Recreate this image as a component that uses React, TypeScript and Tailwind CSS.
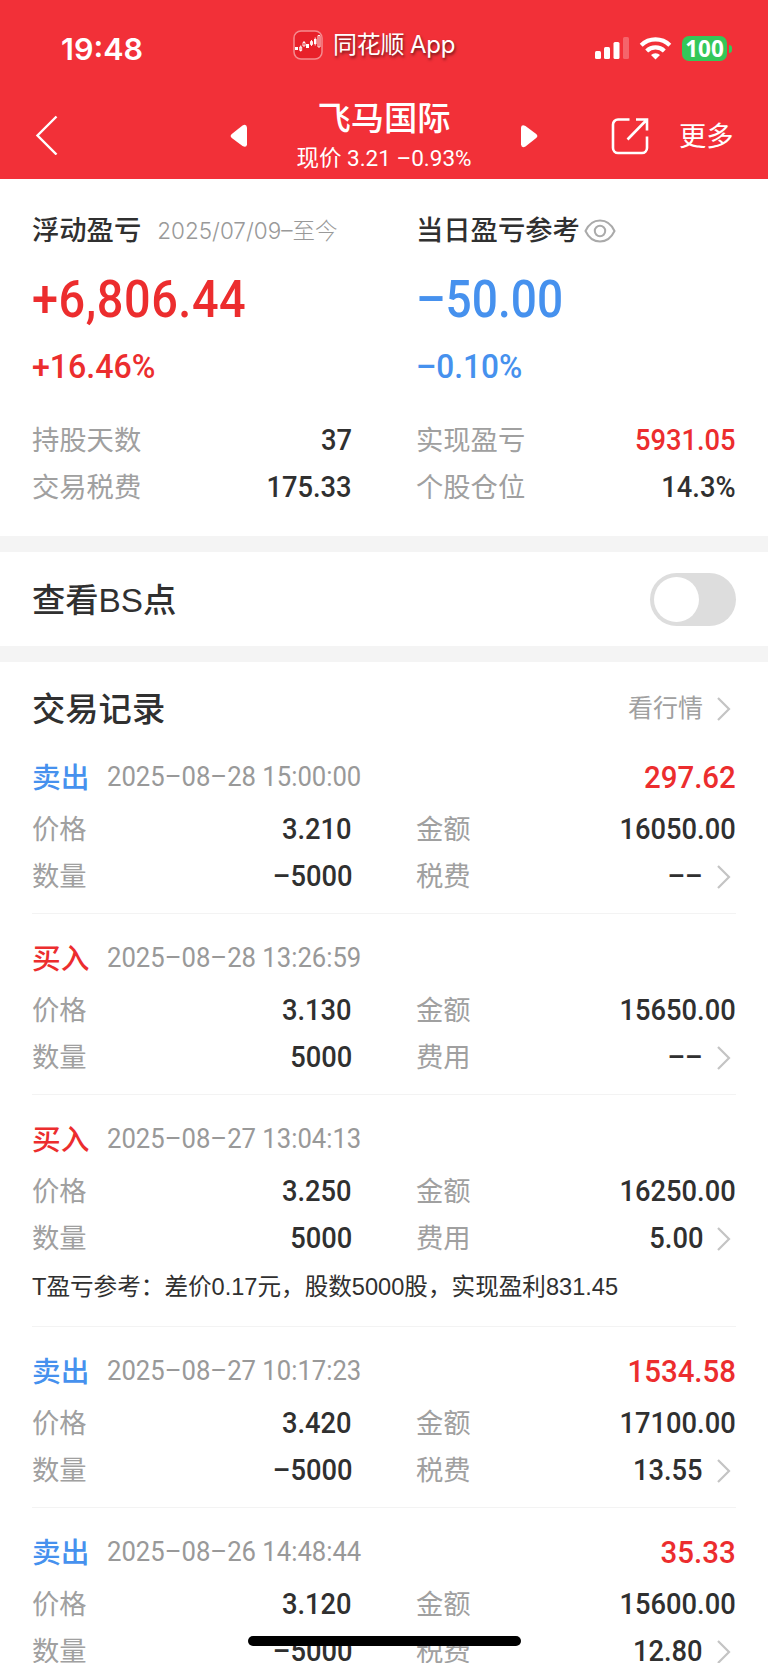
import { useState } from 'react';

type Trade = {
  side: 'buy' | 'sell';
  time: string;
  profit?: string;
  price: string;
  quantity: string;
  amount: string;
  fee: string;
  note?: string;
};

const TRADES: Trade[] = [
  { side: 'sell', time: '2025–08–28 15:00:00', profit: '297.62', price: '3.210', quantity: '–5000', amount: '16050.00', fee: '––' },
  { side: 'buy', time: '2025–08–28 13:26:59', price: '3.130', quantity: '5000', amount: '15650.00', fee: '––' },
  {
    side: 'buy',
    time: '2025–08–27 13:04:13',
    price: '3.250',
    quantity: '5000',
    amount: '16250.00',
    fee: '5.00',
    note: 'T盈亏参考：差价0.17元，股数5000股，实现盈利831.45',
  },
  { side: 'sell', time: '2025–08–27 10:17:23', profit: '1534.58', price: '3.420', quantity: '–5000', amount: '17100.00', fee: '13.55' },
  { side: 'sell', time: '2025–08–26 14:48:44', profit: '35.33', price: '3.120', quantity: '–5000', amount: '15600.00', fee: '12.80' },
];

const NUM = "font-['Roboto','Noto_Sans_CJK_SC',sans-serif]";

function Chevron() {
  return (
    <svg className="ml-[12px] mr-[4px] h-[26px] w-[17px]" viewBox="0 0 17 26" fill="none" stroke="#c4c4c4" strokeWidth="2.200">
      <path d="M3 2 14 13 3 24" />
    </svg>
  );
}

function Row({ label, value, red, arrow }: { label: string; value: string; red?: boolean; arrow?: boolean }) {
  return (
    <div className="flex h-[47px] items-center">
      <span className="pt-px text-[27.3px] text-[#a0a0a0]">{label}</span>
      <span
        className={`${NUM} ml-auto origin-right scale-x-[0.91] pb-[2px] text-[30px] font-medium ${red ? 'text-[#ec2d2e]' : 'text-[#303030]'}`}
      >
        {value}
      </span>
      {arrow && <Chevron />}
    </div>
  );
}

function StatusBar() {
  return (
    <div className="flex h-[94px] items-center">
      <span className="ml-[61px] w-[232px] pt-[3px] font-['Inter'] text-[30.500px] font-semibold">19:48</span>
      <svg className="-mt-[5px] h-[30px] w-[30px]" viewBox="0 0 30 30" fill="none">
        <rect x="1" y="1" width="28" height="28" rx="7" fill="#e8202a" stroke="#f58b8f" strokeWidth="1.5" />
        <g fill="#fff">
          <path d="M2 17h3v3H2zM13 14h3v4h-3zM21 9h2.500v5H21z" />
        </g>
        <g stroke="#fff" strokeWidth=".9">
          <path d="M6.700 17h2v3.500h-2zM10 12.500h2v3.500h-2zM17.500 11.500h2v3h-2zM25 5.500h2v11.500h-2zM7.700 15.500v6M11 11v1.500M18.500 10v6M22.200 7.500v8" />
        </g>
      </svg>
      <span className="-mt-[4px] ml-[10px] text-[24px] tracking-[-0.2px] [text-shadow:1px_2px_3px_rgba(0,0,0,0.55)] [word-spacing:-1px]">
        同花顺 App
      </span>
      <svg className="ml-auto mt-[2px] h-[24px] w-[35px]" viewBox="0 0 35 24" fill="#fff">
        <rect x="0" y="15" width="6" height="8" rx="1.500" />
        <rect x="9" y="11" width="6" height="12" rx="1.500" />
        <rect x="18.500" y="6" width="6" height="17" rx="1.500" />
        <rect x="28" y="1" width="6" height="22" rx="1.500" opacity=".25" />
      </svg>
      <svg className="ml-[9px] mt-[2px] h-[24px] w-[33px]" viewBox="0 0 33 24" fill="none" stroke="#fff" strokeWidth="4.200">
        <path d="M2.200 9.200a20.500 20.500 0 0 1 28.600 0" />
        <path d="M7.700 15a12.600 12.600 0 0 1 17.600 0" />
        <path d="M16.500 23.500l-4.500-4.500a6.400 6.400 0 0 1 9 0z" fill="#fff" stroke="none" />
      </svg>
      <span className="ml-[10px] mt-[3px] flex h-[25px] w-[45px] items-center justify-center rounded-[7px] bg-[#34c759] font-['Noto_Sans'] text-[22.500px] font-bold">
        100
      </span>
      <span className="ml-[2px] mr-[36px] mt-[3px] h-[8px] w-[3px] rounded-r-full bg-[#34c759]" />
    </div>
  );
}

function NavBar() {
  return (
    <div className="flex h-[85px] items-center">
      <svg className="-mt-[3px] ml-[35px] h-[40px] w-[24px]" viewBox="0 0 24 40" fill="none" stroke="#fff" strokeWidth="2.400">
        <path d="M21.500 1.500 2.500 20.500l19 19" />
      </svg>
      <svg className="-mt-[2px] ml-[171px] h-[24px] w-[18px]" viewBox="0 0 18 24" fill="#fff">
        <path d="M1.800 10 12.500 1.500Q16.500-.5 17 3.500v17Q16.500 24 12.500 22L1.800 14Q-.5 12 1.800 10z" />
      </svg>
      <div className="flex w-[272px] flex-col items-center">
        <h1 className="text-[33.300px] font-medium leading-[40px]">飞马国际</h1>
        <p className={`${NUM} pt-[2px] text-[22.500px] leading-[36px]`}>现价 3.21 –0.93%</p>
      </div>
      <svg className="-mt-[2px] h-[24px] w-[18px] rotate-180" viewBox="0 0 18 24" fill="#fff">
        <path d="M1.800 10 12.500 1.500Q16.500-.5 17 3.500v17Q16.500 24 12.500 22L1.800 14Q-.5 12 1.800 10z" />
      </svg>
      <svg className="-mt-[2px] ml-[73px] h-[38px] w-[38px]" viewBox="0 0 38 38" fill="none" stroke="#fff" strokeWidth="2.600">
        <path d="M18.500 2.500H7a5 5 0 0 0-5 5v23.500a5 5 0 0 0 5 5h24a5 5 0 0 0 5-5V19.500M25 2.500h11V13.500M35.500 3 16.500 22.500" />
      </svg>
      <span className="ml-[30px] pt-px text-[27.300px]">更多</span>
    </div>
  );
}

function TradeItem({ trade }: { trade: Trade }) {
  const sell = trade.side === 'sell';
  return (
    <li className="border-b border-[#f3f3f3] pb-[13px] pt-[23px]">
      <div className="mb-[6px] flex h-[44px] items-center">
        <span className={`w-[75px] text-[28.700px] font-medium ${sell ? 'text-[#4691ee]' : 'text-[#ec2d2e]'}`}>
          {sell ? '卖出' : '买入'}
        </span>
        <span className={`${NUM} origin-left scale-x-[0.95] pb-px text-[27px] text-[#999]`}>{trade.time}</span>
        {trade.profit && (
          <span className={`${NUM} ml-auto origin-right scale-x-[0.92] pb-[2px] text-[32px] font-medium text-[#ec2d2e]`}>
            {trade.profit}
          </span>
        )}
      </div>
      <div className="grid grid-cols-2 gap-x-16">
        <Row label="价格" value={trade.price} />
        <Row label="金额" value={trade.amount} />
        <Row label="数量" value={trade.quantity} />
        <Row label={sell ? '税费' : '费用'} value={trade.fee} arrow />
      </div>
      {trade.note && (
        <p className="h-[51px] whitespace-nowrap font-['Liberation_Sans','Noto_Sans_CJK_SC',sans-serif] text-[23.600px] leading-[50px] text-[#303030]">
          {trade.note}
        </p>
      )}
    </li>
  );
}

export default function App() {
  const [showBs, setShowBs] = useState(false);

  return (
    <div className="relative h-[1663px] w-[768px] overflow-hidden bg-white font-['Inter','Noto_Sans_CJK_SC',sans-serif] text-[#303030]">
      <header className="h-[179px] bg-[#f23038] text-white">
        <StatusBar />
        <NavBar />
      </header>

      {/* Profit summary */}
      <section className="grid h-[357px] grid-cols-2 content-start gap-x-16 px-8 pt-[29px]">
        <div>
          <div className="flex h-[46px] items-center">
            <h2 className="text-[27.300px] font-medium">浮动盈亏</h2>
            <span className="ml-[16px] text-[22.500px] font-light text-[#999]">2025/07/09–至今</span>
          </div>
          <p className={`${NUM} h-[90px] origin-left scale-x-[0.91] text-[51.500px] font-medium leading-[91px] tracking-[0.6px] text-[#ec2d2e]`}>
            +6,806.44
          </p>
          <p className={`${NUM} mb-[23px] h-[50px] origin-left scale-x-[0.945] text-[34px] font-medium leading-[44px] text-[#ec2d2e]`}>
            +16.46%
          </p>
          <Row label="持股天数" value="37" />
          <Row label="交易税费" value="175.33" />
        </div>
        <div>
          <div className="flex h-[46px] items-center">
            <h2 className="text-[27.300px] font-medium">当日盈亏参考</h2>
            <svg className="ml-[4px] h-[24px] w-[32px]" viewBox="0 0 32 24" fill="none" stroke="#aaa" strokeWidth="2">
              <path d="M1.500 12C8-2 24-2 30.500 12 24 26 8 26 1.500 12z" />
              <circle cx="16" cy="12" r="5.200" />
            </svg>
          </div>
          <p className={`${NUM} h-[90px] origin-left scale-x-[0.895] text-[51.500px] font-medium leading-[91px] text-[#4691ee]`}>
            –50.00
          </p>
          <p className={`${NUM} mb-[23px] h-[50px] origin-left scale-x-[0.93] text-[34px] font-medium leading-[44px] text-[#4691ee]`}>
            –0.10%
          </p>
          <Row label="实现盈亏" value="5931.05" red />
          <Row label="个股仓位" value="14.3%" />
        </div>
      </section>

      {/* BS point switch */}
      <section className="flex h-[126px] items-center justify-between border-y-[16px] border-[#f4f4f4] px-8">
        <h2 className="pt-[3px] font-['Liberation_Sans','Noto_Sans_CJK_SC',sans-serif] text-[33.300px] font-medium">查看BS点</h2>
        <button
          type="button"
          role="switch"
          aria-checked={showBs}
          aria-label="查看BS点"
          onClick={() => setShowBs(!showBs)}
          className={`flex h-[53px] w-[86px] items-center rounded-full bg-[#ddd] px-[4px] ${showBs ? 'justify-end' : 'justify-start'}`}
        >
          <span className="h-[45px] w-[45px] rounded-full bg-white" />
        </button>
      </section>

      {/* Trade records */}
      <section className="px-8">
        <div className="flex h-[70px] items-end justify-between">
          <h2 className="text-[33.300px] font-medium leading-[46px]">交易记录</h2>
          <a href="#" className="flex h-[46px] items-center text-[25px] text-[#a0a0a0]">
            看行情
            <Chevron />
          </a>
        </div>
        <ul className="pt-px">
          {TRADES.map((t) => (
            <TradeItem key={t.time} trade={t} />
          ))}
        </ul>
      </section>

      {/* Home indicator */}
      <div className="absolute left-[248px] top-[1636px] h-[10px] w-[273px] rounded-full bg-black" />
    </div>
  );
}
